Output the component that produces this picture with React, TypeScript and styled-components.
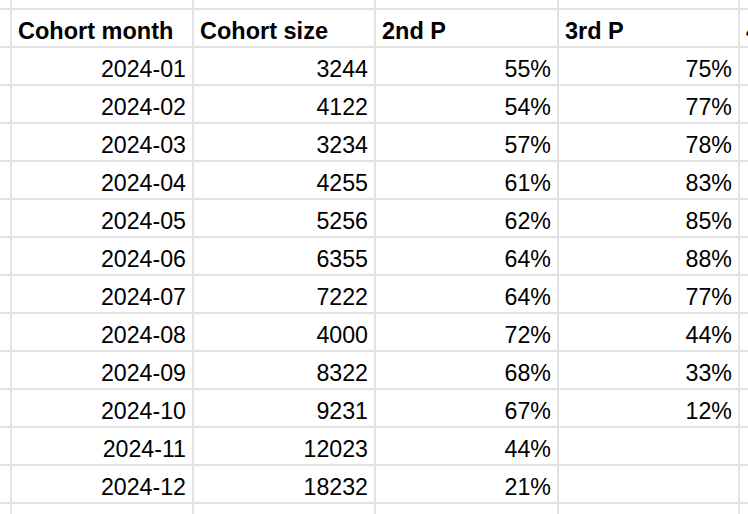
import React from "react";
import styled, { createGlobalStyle } from "styled-components";

const GlobalStyle = createGlobalStyle`
  html, body {
    margin: 0;
    padding: 0;
    background: #ffffff;
    overflow: hidden;
  }
  body {
    font-family: "Liberation Sans", Arial, Helvetica, sans-serif;
  }
`;

const Viewport = styled.div`
  width: 748px;
  height: 514px;
  overflow: hidden;
  background: #ffffff;
`;

const Sheet = styled.div`
  display: grid;
  grid-template-columns: 10px 180px 180px 181px 179px 180px;
  grid-template-rows: 8px repeat(14, 36px);
  gap: 2px;
  background: #e2e2e2;
  width: max-content;
`;

const Blank = styled.div`
  background: #ffffff;
`;

const Cell = styled.div<{ $bold?: boolean; $align?: "left" | "right" }>`
  background: #ffffff;
  display: flex;
  align-items: flex-end;
  justify-content: ${(p) => (p.$align === "right" ? "flex-end" : "flex-start")};
  padding: 0 6px 3px 6px;
  box-sizing: border-box;
  font-size: ${(p) => (p.$bold ? "23.5px" : "23.2px")};
  line-height: 1;
  font-weight: ${(p) => (p.$bold ? 700 : 400)};
  color: #000000;
  white-space: nowrap;
  overflow: hidden;
`;

const headers = ["Cohort month", "Cohort size", "2nd P", "3rd P", "4th P"];

const rows: [string, string, string, string][] = [
  ["2024-01", "3244", "55%", "75%"],
  ["2024-02", "4122", "54%", "77%"],
  ["2024-03", "3234", "57%", "78%"],
  ["2024-04", "4255", "61%", "83%"],
  ["2024-05", "5256", "62%", "85%"],
  ["2024-06", "6355", "64%", "88%"],
  ["2024-07", "7222", "64%", "77%"],
  ["2024-08", "4000", "72%", "44%"],
  ["2024-09", "8322", "68%", "33%"],
  ["2024-10", "9231", "67%", "12%"],
  ["2024-11", "12023", "44%", ""],
  ["2024-12", "18232", "21%", ""],
];

export default function App() {
  return (
    <>
      <GlobalStyle />
      <Viewport>
        <Sheet>
          {Array.from({ length: 6 }).map((_, i) => (
            <Blank key={`top-${i}`} />
          ))}
          <Blank />
          {headers.map((h) => (
            <Cell key={h} $bold>
              {h}
            </Cell>
          ))}
          {rows.map((r, ri) => (
            <React.Fragment key={ri}>
              <Blank />
              {r.map((v, ci) => (
                <Cell key={ci} $align="right">
                  {v}
                </Cell>
              ))}
              <Cell $align="right" />
            </React.Fragment>
          ))}
          {Array.from({ length: 6 }).map((_, i) => (
            <Blank key={`bottom-${i}`} />
          ))}
        </Sheet>
      </Viewport>
    </>
  );
}
